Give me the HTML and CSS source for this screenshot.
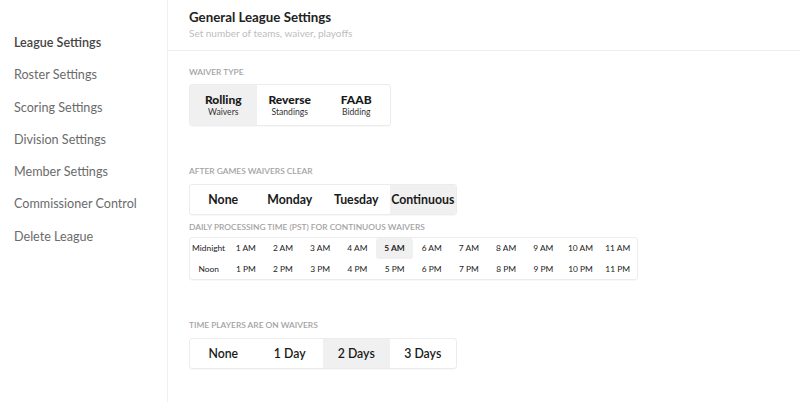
FILE: index.html
```html
<!DOCTYPE html>
<html lang="en">
<head>
    <meta charset="UTF-8">
    <meta name="viewport" content="width=device-width, initial-scale=1.0">
    <title>League Settings</title>
    <link rel="stylesheet" href="styles.css">
</head>
<body>
    <div class="page">
        <div class="sidebar">
            <div class="nav-item active">League Settings</div>
            <div class="nav-item">Roster Settings</div>
            <div class="nav-item">Scoring Settings</div>
            <div class="nav-item">Division Settings</div>
            <div class="nav-item">Member Settings</div>
            <div class="nav-item">Commissioner Control</div>
            <div class="nav-item">Delete League</div>
        </div>

        <div class="main">
            <div class="header">
                <h1>General League Settings</h1>
                <p>Set number of teams, waiver, playoffs</p>
            </div>

            <div class="content">
                <div class="label first">Waiver Type</div>
                <div class="segmented tall">
                    <div class="seg selected"><b>Rolling</b><span>Waivers</span></div>
                    <div class="seg"><b>Reverse</b><span>Standings</span></div>
                    <div class="seg"><b>FAAB</b><span>Bidding</span></div>
                </div>

                <div class="label gap">After Games Waivers Clear</div>
                <div class="segmented">
                    <div class="seg">None</div>
                    <div class="seg">Monday</div>
                    <div class="seg">Tuesday</div>
                    <div class="seg selected">Continuous</div>
                </div>

                <div class="label small-gap">Daily Processing Time (PST) for Continuous Waivers</div>
                <div class="time-grid" id="time-grid"></div>

                <div class="label gap">Time Players Are On Waivers</div>
                <div class="segmented light">
                    <div class="seg">None</div>
                    <div class="seg">1 Day</div>
                    <div class="seg selected">2 Days</div>
                    <div class="seg">3 Days</div>
                </div>
            </div>
        </div>
    </div>

    <script>
        const grid = document.getElementById('time-grid');
        const selectedHour = 5;

        // Build the 24 hour cells, AM row then PM row
        ['AM', 'PM'].forEach(half => {
            for (let h = 0; h < 12; h++) {
                const cell = document.createElement('div');
                cell.className = 'time';
                if (h === 0) {
                    cell.textContent = half === 'AM' ? 'Midnight' : 'Noon';
                } else {
                    cell.textContent = `${h} ${half}`;
                }
                if (half === 'AM' && h === selectedHour) {
                    cell.classList.add('selected');
                }
                grid.appendChild(cell);
            }
        });
    </script>
</body>
</html>
```

FILE: styles.css
```css
body {
    margin: 0;
    font-family: Lato, "Open Sans", sans-serif;
    background: #fff;
    color: #222;
}
.page {
    display: flex;
    min-height: 402px;
}
.sidebar {
    width: 168px;
    flex-shrink: 0;
    border-right: 1px solid #f0f0f0;
    padding-top: 27px;
    box-sizing: border-box;
}
.nav-item {
    padding-left: 14px;
    font-size: 12.6px;
    line-height: 32.3px;
    color: #6b6b6b;
}
.nav-item.active {
    color: #444;
    font-weight: 600;
}
.main {
    flex: 1;
}
.header {
    padding: 9px 21px 0;
    height: 41px;
    border-bottom: 1px solid #eeeeee;
}
.header h1 {
    margin: 0;
    font-size: 13.3px;
    line-height: 17px;
    font-weight: 700;
    color: #222;
}
.header p {
    margin: 0;
    font-size: 10px;
    line-height: 14px;
    color: #bdbdbd;
}
.content {
    padding-left: 21px;
}
.label {
    font-size: 8.4px;
    line-height: 12px;
    font-weight: 600;
    text-transform: uppercase;
    color: #a3a3a3;
    margin-bottom: 6px;
}
.label.first {
    margin-top: 15px;
}
.label.gap {
    margin-top: 39px;
    margin-bottom: 7px;
}
.label.small-gap {
    margin-top: 6px;
    margin-bottom: 4px;
}
.segmented {
    display: inline-flex;
    border: 1px solid #ececec;
    border-radius: 3px;
    box-shadow: 0 1px 1px rgba(0, 0, 0, 0.03);
    overflow: hidden;
}
.seg {
    width: 66.5px;
    height: 29px;
    display: flex;
    align-items: center;
    justify-content: center;
    font-size: 12.3px;
    font-weight: 700;
    color: #1a1a1a;
}
.segmented.light .seg {
    font-weight: 600;
}
.seg.selected {
    background: #f0f0f0;
}
.segmented.tall .seg {
    height: 40px;
    flex-direction: column;
}
.segmented.tall .seg b {
    font-size: 12px;
    line-height: 15px;
}
.segmented.tall .seg span {
    font-size: 8.6px;
    line-height: 11px;
    font-weight: 400;
    color: #333;
}
.time-grid {
    display: grid;
    grid-template-columns: repeat(12, 37.2px);
    grid-auto-rows: 20.5px;
    width: 447px;
    border: 1px solid #ececec;
    border-radius: 3px;
    box-shadow: 0 1px 1px rgba(0, 0, 0, 0.03);
}
.time {
    display: flex;
    align-items: center;
    justify-content: center;
    font-size: 8.4px;
    color: #222;
    border-radius: 3px;
}
.time.selected {
    background: #f0f0f0;
    font-weight: 700;
}
```
